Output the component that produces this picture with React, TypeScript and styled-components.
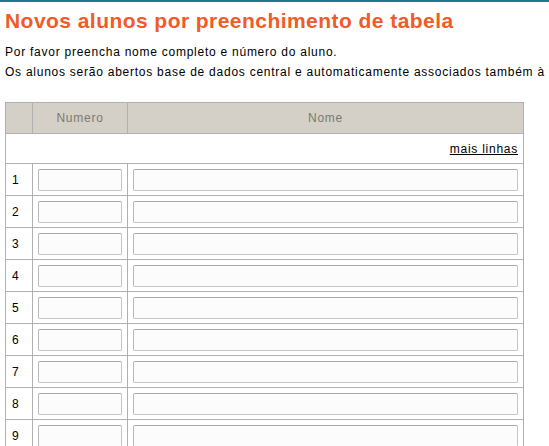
import React from 'react';
import styled, { createGlobalStyle } from 'styled-components';

const GlobalStyle = createGlobalStyle`
  html, body {
    margin: 0;
    padding: 0;
    overflow: hidden;
    background: #ffffff;
  }
  body {
    font-family: "Liberation Sans", Arial, sans-serif;
    letter-spacing: 0.75px;
  }
`;

const Page = styled.div`
  border-top: 2px solid #1b7c8c;
  padding: 0 5px;
`;

const Title = styled.h1`
  margin: 6px 0 0;
  font-size: 21px;
  line-height: 25px;
  font-weight: bold;
  letter-spacing: 0.45px;
  color: #f15a29;
`;

const Intro = styled.p<{ $first?: boolean }>`
  margin: ${(p) => (p.$first ? '9px' : '0')} 0 0;
  font-size: 12px;
  line-height: 20px;
  color: #000;
  white-space: nowrap;
`;

const Table = styled.table`
  margin-top: 20px;
  border-collapse: collapse;
  width: 519px;
  table-layout: fixed;
  font-size: 12px;
`;

const HeadCell = styled.th`
  background: #d4d0c8;
  border: 1px solid #b0b0b0;
  height: 30px;
  padding: 0;
  font-weight: normal;
  color: #7d7a6c;
  text-align: center;
`;

const MoreCell = styled.td`
  border: 1px solid #b0b0b0;
  height: 29px;
  padding: 0 5px;
  text-align: right;
`;

const MoreLink = styled.a`
  color: #000;
  text-decoration: underline;
  cursor: pointer;
`;

const NumCell = styled.td`
  border: 1px solid #b0b0b0;
  height: 31px;
  padding: 0 0 0 6px;
  color: #000;
`;

const FieldCell = styled.td`
  border: 1px solid #b0b0b0;
  height: 31px;
  padding: 0 5px;
`;

const Field = styled.input`
  display: block;
  box-sizing: border-box;
  width: 100%;
  height: 22px;
  margin: 0;
  border: 1px solid #c4c4c4;
  border-top-color: #a9a9a9;
  border-left-color: #b8b8b8;
  border-radius: 2px;
  background: #fcfcfc;
  font: 12px "Liberation Sans", Arial, sans-serif;
  outline: none;
`;

const rows = Array.from({ length: 9 }, (_, i) => i + 1);

export default function App() {
  return (
    <>
      <GlobalStyle />
      <Page>
        <Title>Novos alunos por preenchimento de tabela</Title>
        <Intro $first>Por favor preencha nome completo e número do aluno.</Intro>
        <Intro>
          Os alunos serão abertos base de dados central e automaticamente associados também à turma.
        </Intro>
        <Table>
          <colgroup>
            <col style={{ width: 27 }} />
            <col style={{ width: 95 }} />
            <col />
          </colgroup>
          <thead>
            <tr>
              <HeadCell />
              <HeadCell>Numero</HeadCell>
              <HeadCell>Nome</HeadCell>
            </tr>
          </thead>
          <tbody>
            <tr>
              <MoreCell colSpan={3}>
                <MoreLink>mais linhas</MoreLink>
              </MoreCell>
            </tr>
            {rows.map((n) => (
              <tr key={n}>
                <NumCell>{n}</NumCell>
                <FieldCell>
                  <Field type="text" />
                </FieldCell>
                <FieldCell>
                  <Field type="text" />
                </FieldCell>
              </tr>
            ))}
          </tbody>
        </Table>
      </Page>
    </>
  );
}
